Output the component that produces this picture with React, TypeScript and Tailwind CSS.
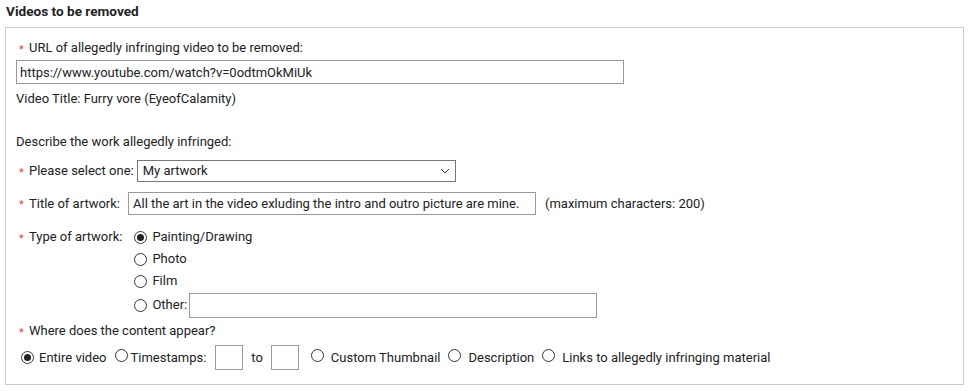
import React from "react";

function Star() {
  return <span className="text-[#e0453a] text-[11px] w-[10px] inline-block leading-none relative top-[1px]">*</span>;
}

function Radio({ checked = false }: { checked?: boolean }) {
  return (
    <span className="inline-flex items-center justify-center w-[13px] h-[13px] rounded-full border border-[#333] bg-white shrink-0">
      {checked && <span className="w-[7px] h-[7px] rounded-full bg-[#222]" />}
    </span>
  );
}

export default function App() {
  return (
    <div className="w-[970px] h-[391px] bg-white text-[#222] text-[13px]" style={{ fontFamily: "Roboto, 'Liberation Sans', sans-serif" }}>
      <div className="pl-[6px] font-bold leading-[22px] text-[13.6px]">Videos to be removed</div>
      <div className="mt-[5px] ml-[5px] w-[959px] border border-[#cccccc] pl-[10px] pt-[11px] pb-[14px]">
        <div className="flex items-center leading-[18px] pl-[3px]">
          <Star />
          <span>URL of allegedly infringing video to be removed:</span>
        </div>
        <div className="mt-[3px] w-[608px] h-[24px] border border-[#999] flex items-center px-[3px] leading-none">
          https://www.youtube.com/watch?v=0odtmOkMiUk
        </div>
        <div className="mt-[6px] leading-[18px]">Video Title: Furry vore (EyeofCalamity)</div>
        <div className="mt-[25px] leading-[18px]">Describe the work allegedly infringed:</div>
        <div className="mt-[9px] flex items-center h-[22px] pl-[3px]">
          <Star />
          <span>Please select one:</span>
          <div className="ml-[3px] w-[319px] h-[22px] border border-[#777] flex items-center justify-between pl-[5px] pr-[4px]">
            <span>My artwork</span>
            <svg width="10" height="6" viewBox="0 0 10 6" className="mr-[1px]">
              <path d="M1 1 L5 5 L9 1" stroke="#333" strokeWidth="1" fill="none" />
            </svg>
          </div>
        </div>
        <div className="mt-[10px] flex items-center h-[23px] pl-[3px]">
          <Star />
          <span>Title of artwork:</span>
          <div className="ml-[8px] w-[408px] h-[23px] border border-[#999] flex items-center px-[4px]">
            All the art in the video exluding the intro and outro picture are mine.
          </div>
          <span className="ml-[9px]">(maximum characters: 200)</span>
        </div>
        <div className="mt-[11px] flex pl-[3px]">
          <div className="flex items-center h-[22px]">
            <Star />
            <span>Type of artwork:</span>
          </div>
          <div className="ml-[12px] flex flex-col">
            <div className="flex items-center h-[22px] gap-[5px]"><Radio checked /><span>Painting/Drawing</span></div>
            <div className="flex items-center h-[22px] gap-[5px]"><Radio /><span>Photo</span></div>
            <div className="flex items-center h-[22px] gap-[5px]"><Radio /><span>Film</span></div>
            <div className="flex items-center h-[26px] gap-[5px]">
              <Radio />
              <span>Other:</span>
              <div className="ml-[-3px] w-[408px] h-[25px] border border-[#999]" />
            </div>
          </div>
        </div>
        <div className="mt-[4px] flex items-center leading-[18px] pl-[3px]">
          <Star />
          <span>Where does the content appear?</span>
        </div>
        <div className="mt-[5px] flex items-center h-[25px] pl-[5px]">
          <Radio checked />
          <span className="ml-[5px]">Entire video</span>
          <span className="ml-[9px]"><Radio /></span>
          <span className="ml-[2px]">Timestamps:</span>
          <div className="ml-[9px] w-[28px] h-[25px] border border-[#999]" />
          <span className="ml-[8px]">to</span>
          <div className="ml-[8px] w-[28px] h-[25px] border border-[#999]" />
          <span className="ml-[12px]"><Radio /></span>
          <span className="ml-[7px]">Custom Thumbnail</span>
          <span className="ml-[8px]"><Radio /></span>
          <span className="ml-[7px]">Description</span>
          <span className="ml-[8px]"><Radio /></span>
          <span className="ml-[7px]">Links to allegedly infringing material</span>
        </div>
      </div>
    </div>
  );
}
